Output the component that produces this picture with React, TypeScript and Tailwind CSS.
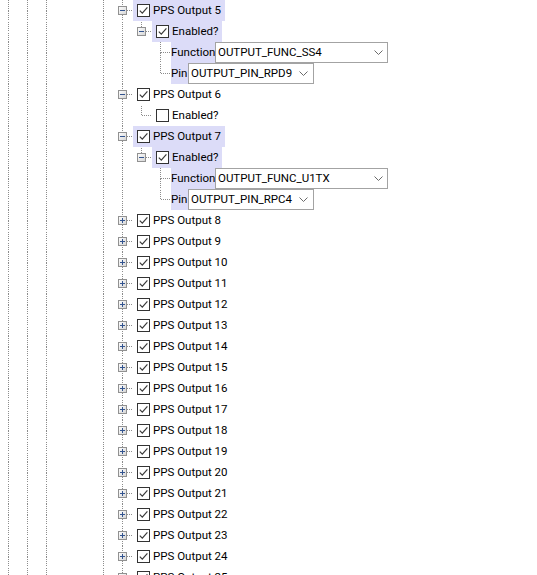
import React from "react";

type CellDef = { up?: boolean; down?: boolean; right?: boolean; box?: "plus" | "minus" };

const L: CellDef = { up: true, down: true };
const E: CellDef = {};
const base: CellDef[] = [L, L, L, E, E, L];

function Cell({ c, phase }: { c: CellDef; phase: number }) {
  const dot = { stroke: "#8c8c8c", strokeWidth: 1, strokeDasharray: "1 1" };
  const b = !!c.box;
  return (
    <svg width="19" height="21" className="block shrink-0">
      {c.up && <line x1="8.5" y1="0" x2="8.5" y2={b ? 6 : 11} {...dot} strokeDashoffset={phase} />}
      {c.down && <line x1="8.5" y1={b ? 15 : 11} x2="8.5" y2="21" {...dot} strokeDashoffset={phase} />}
      {c.right && <line x1={b ? 13 : 9} y1="10.5" x2="19" y2="10.5" {...dot} />}
      {b && (
        <g>
          <defs>
            <linearGradient id="bx" x1="0" y1="0" x2="1" y2="1">
              <stop offset="0" stopColor="#ffffff" />
              <stop offset="1" stopColor="#d4d4d4" />
            </linearGradient>
          </defs>
          <rect x="4.5" y="6.5" width="8" height="8" fill="url(#bx)" stroke="#919191" />
          <line x1="6" y1="10.5" x2="11" y2="10.5" stroke="#33548f" />
          {c.box === "plus" && <line x1="8.5" y1="8" x2="8.5" y2="13" stroke="#33548f" />}
        </g>
      )}
    </svg>
  );
}

function Check({ on }: { on: boolean }) {
  return (
    <span className="flex h-[13px] w-[13px] shrink-0 items-center justify-center border border-[#333333] bg-white">
      {on && (
        <svg width="11" height="11" viewBox="0 0 11 11">
          <path d="M1.8 5.6 L4.3 8.2 L9.4 2.4" fill="none" stroke="#3a3a3a" strokeWidth="1.2" />
        </svg>
      )}
    </span>
  );
}

function Node({ text, on, sel }: { text: string; on: boolean; sel?: boolean }) {
  return (
    <div className={`flex h-[21px] items-center pl-[4px] pr-[4px] ${sel ? "bg-[#dcdcf8]" : ""}`}>
      <Check on={on} />
      <span className="ml-[3px] whitespace-nowrap pt-[1px]">{text}</span>
    </div>
  );
}

function Chevron() {
  return (
    <svg width="9" height="5" className="shrink-0">
      <path d="M0.5 0.5 L4.5 4.5 L8.5 0.5" fill="none" stroke="#6a6a6a" />
    </svg>
  );
}

type Row = { cols: CellDef[]; content: React.ReactNode };

function outputRows(n: number, func: string, pin: string, sel: boolean): Row[] {
  return [
    { cols: [...base, { up: true, down: true, right: true, box: "minus" }], content: <Node text={`PPS Output ${n}`} on sel={sel} /> },
    { cols: [...base, L, { up: true, right: true, box: "minus" }], content: <Node text="Enabled?" on sel={sel} /> },
    {
      cols: [...base, L, E, { up: true, down: true, right: true }],
      content: (
        <div className="flex h-[21px] items-center">
          <div className="flex h-[21px] w-[44px] items-center bg-[#dcdcf8] pt-[1px]">Function</div>
          <div className="flex h-[21px] w-[173px] items-center border border-[#a3a3a3] bg-white pl-[2px] pr-[4px]">
            <span className="flex-1 whitespace-nowrap pt-[1px]">{func}</span>
            <Chevron />
          </div>
        </div>
      ),
    },
    {
      cols: [...base, L, E, { up: true, right: true }],
      content: (
        <div className="flex h-[21px] items-center">
          <div className="flex h-[21px] w-[17px] items-center bg-[#dcdcf8] pt-[1px]">Pin</div>
          <div className="flex h-[21px] w-[126px] items-center border border-[#a3a3a3] bg-white pl-[2px] pr-[5px]">
            <span className="flex-1 whitespace-nowrap pt-[1px]">{pin}</span>
            <Chevron />
          </div>
        </div>
      ),
    },
  ];
}

const rows: Row[] = [
  ...outputRows(5, "OUTPUT_FUNC_SS4", "OUTPUT_PIN_RPD9", true),
  { cols: [...base, { up: true, down: true, right: true, box: "minus" }], content: <Node text="PPS Output 6" on /> },
  { cols: [...base, L, { up: true, right: true }], content: <Node text="Enabled?" on={false} /> },
  ...outputRows(7, "OUTPUT_FUNC_U1TX", "OUTPUT_PIN_RPC4", true),
  ...Array.from({ length: 18 }, (_, i) => ({
    cols: [...base, { up: true, down: true, right: true, box: "plus" as const }],
    content: <Node text={`PPS Output ${i + 8}`} on />,
  })),
];

export default function App() {
  return (
    <div className="h-[575px] w-[537px] overflow-hidden bg-white text-[11.5px] text-black [font-family:Roboto,'Liberation_Sans',sans-serif]">
      {rows.map((r, i) => (
        <div key={i} className="flex h-[21px] items-center">
          {r.cols.map((c, k) => (
            <Cell key={k} c={c} phase={i % 2} />
          ))}
          {r.content}
        </div>
      ))}
    </div>
  );
}
